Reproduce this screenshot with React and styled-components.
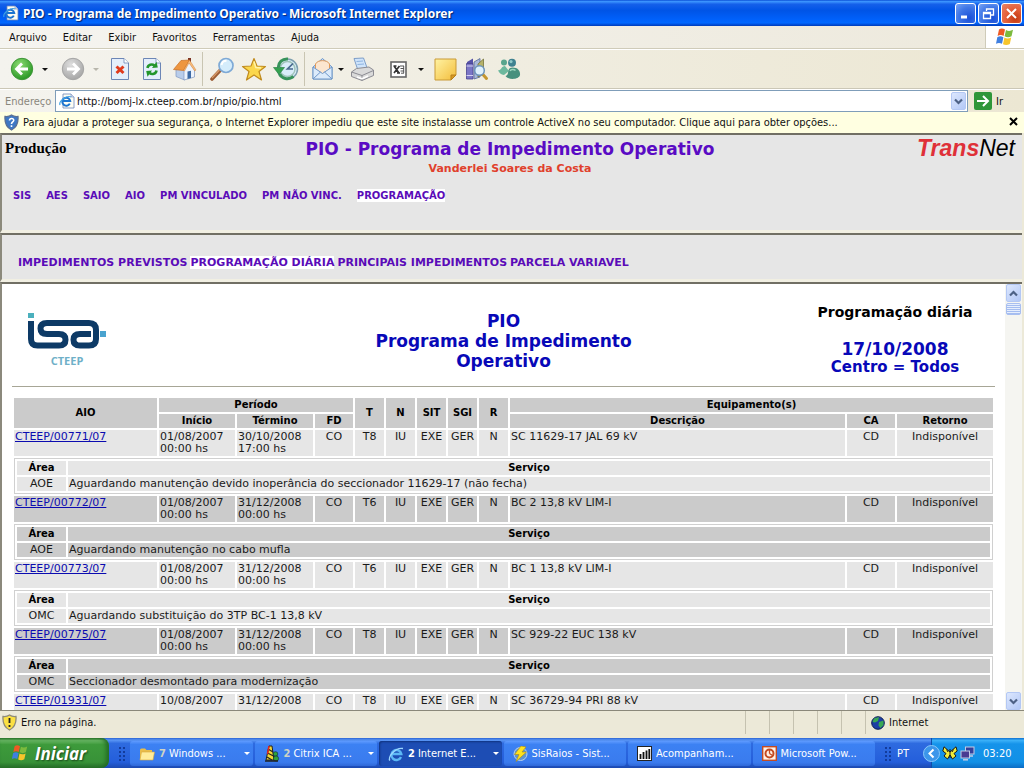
import React from "react";
import styled, { createGlobalStyle, css } from "styled-components";

const ui = `"DejaVu Sans Condensed", "DejaVu Sans", sans-serif`;
const verdana = `"DejaVu Sans", "Liberation Sans", sans-serif`;

const GlobalStyle = createGlobalStyle`
  * { box-sizing: border-box; }
  html, body { margin: 0; height: 100%; }
  #root { height: 100vh; }
  button { font: inherit; color: inherit; background: none; border: 0; padding: 0; }
`;

/* ---------- window ---------- */

const Desktop = styled.div`
  height: 100vh;
  display: flex;
  flex-direction: column;
  overflow: hidden;
  background: #ece9d8;
  font-family: ${ui};
  font-size: 11px;
  color: #111;
`;

const TitleBar = styled.header`
  flex: none;
  height: 26px;
  display: flex;
  align-items: center;
  gap: 4px;
  padding: 0 2px 0 3px;
  background: linear-gradient(#0a4fd6 0%, #3c95ff 6%, #1560ea 16%, #0054e6 40%, #0061fb 75%, #0168ff 88%, #0048d0 96%, #003cb8 100%);
`;

const WindowTitle = styled.h1`
  flex: 1;
  margin: 0;
  font-family: "Noto Sans", sans-serif;
  font-size: 12px;
  font-weight: 700;
  color: #fff;
  text-shadow: 1px 1px 1px #0a246a;
  white-space: nowrap;
`;

const CaptionButton = styled.button`
  width: 21px;
  height: 21px;
  border: 1px solid #fff;
  border-radius: 3px;
  display: grid;
  place-items: center;
  margin-left: -2px;
  background: ${(p) =>
    p.$close
      ? "radial-gradient(circle at 70% 75%, #c33a12, #e5603b 50%, #e98568)"
      : "radial-gradient(circle at 70% 75%, #1a50d8, #3f76e6 55%, #7aa5f5)"};
`;

const MenuBar = styled.nav`
  flex: none;
  height: 23px;
  display: flex;
  align-items: stretch;
  background: linear-gradient(90deg, #f5f4f0, #ede9dc);
  border-bottom: 1px solid #cfcbb9;
`;

const MenuList = styled.div`
  flex: 1;
  display: flex;
  align-items: center;
  gap: 16px;
  padding-left: 9px;
`;

const Throbber = styled.div`
  width: 39px;
  display: grid;
  place-items: center;
  background: #fff;
  border-left: 1px solid #cfcbb9;
`;

const Toolbar = styled.div`
  flex: none;
  height: 40px;
  display: flex;
  align-items: center;
  padding-left: 6px;
  background: linear-gradient(90deg, #f4f3ee, #ece7d3);
  border-top: 1px solid #fff;
  border-bottom: 1px solid #cbc7b6;
`;

const ToolButton = styled.button`
  width: ${(p) => (p.$narrow ? 28 : 32)}px;
  height: 32px;
  display: grid;
  place-items: center;
`;

const DropButton = styled.button`
  width: ${(p) => (p.$narrow ? 10 : 14)}px;
  height: 32px;
  display: grid;
  place-items: center;
  margin-right: ${(p) => p.$after || 0}px;

  &::before {
    content: "";
    border: 3px solid transparent;
    border-top-color: ${(p) => (p.$disabled ? "#b8b6ac" : "#111")};
    border-bottom: 0;
  }
`;

const DropSpacer = styled.span`
  width: 4px;
`;

const ToolSeparator = styled.span`
  width: 1px;
  height: 34px;
  margin: 0 3px 0 2px;
  background: #c9c5b2;
`;

const AddressBar = styled.form`
  flex: none;
  height: 23px;
  display: flex;
  align-items: center;
  padding: 0 21px 0 5px;
  background: linear-gradient(90deg, #f4f3ee, #ece7d3);
  border-top: 1px solid #fff;
`;

const AddressLabel = styled.label`
  color: #8a877d;
  width: 50px;
`;

const AddressField = styled.div`
  flex: 1;
  height: 22px;
  display: flex;
  align-items: center;
  padding: 0 1px 0 3px;
  background: #fff;
  border: 1px solid #7f9db9;
`;

const AddressInput = styled.input`
  flex: 1;
  min-width: 0;
  border: 0;
  outline: 0;
  padding: 0 2px;
  font: inherit;
  color: #111;
  background: transparent;
`;

const ChevronButton = styled.button`
  width: 15px;
  height: 18px;
  display: grid;
  place-items: center;
  border-radius: 2px;
  border: 1px solid #b4c8f4;
  background: linear-gradient(135deg, #dce7fe, #b3c8f6);
`;

const GoButton = styled.button`
  display: flex;
  align-items: center;
  gap: 4px;
  margin-left: 6px;
`;

const InfoBar = styled.div`
  flex: none;
  height: 21px;
  display: flex;
  align-items: center;
  gap: 4px;
  padding: 0 6px 0 4px;
  background: #ffffe1;
`;

const InfoText = styled.button`
  flex: 1;
  text-align: left;
  white-space: nowrap;
`;

/* ---------- page frames ---------- */

const Frames = styled.main`
  flex: 1;
  min-height: 0;
  display: flex;
  flex-direction: column;
  padding-right: 2px;
  font-family: ${verdana};
`;

const frame = css`
  border-top: 2px solid #716f64;
  border-left: 2px solid #8b897c;
`;

const TopFrame = styled.header`
  ${frame}
  flex: none;
  height: 100px;
  padding: 4px 7px 0 3px;
  background: #e6e6e6;
  border-bottom: 3px solid #f1efe2;
`;

const TopRow = styled.div`
  display: grid;
  grid-template-columns: 1fr auto 1fr;
  align-items: start;
  height: 50px;
`;

const Environment = styled.strong`
  font-family: "Liberation Serif", serif;
  font-size: 15px;
  line-height: 18px;
  color: #000;
`;

const AppHeading = styled.div`
  text-align: center;
  font-weight: 700;
  font-size: 17px;
  line-height: 20px;
  color: #5a0bc4;
`;

const UserName = styled.div`
  font-size: 11px;
  color: #e0402c;
`;

const Brand = styled.div`
  justify-self: end;
  font-family: "Liberation Sans", sans-serif;
  font-style: italic;
  font-size: 23px;
  line-height: 18px;
  color: #000;

  b { color: #df3038; }
`;

const LinkRow = styled.nav`
  display: flex;
  align-items: center;
  gap: ${(p) => p.$gap}px;
  font-size: ${(p) => p.$size}px;
  line-height: 13px;
  font-weight: 700;
  padding-left: ${(p) => p.$indent}px;
`;

const NavLink = styled.a`
  color: #5a0bb8;
  text-decoration: none;
  white-space: nowrap;
  background: ${(p) => (p.$active ? "#fff" : "none")};
`;

const SubFrame = styled.div`
  ${frame}
  flex: none;
  height: 49px;
  padding-top: 21px;
  background: #e6e6e6;
  border-bottom: 3px solid #f1efe2;
`;

const MainFrame = styled.section`
  ${frame}
  flex: 1;
  min-height: 0;
  display: flex;
  background: #fff;
`;

const Page = styled.div`
  flex: 1;
  min-width: 0;
  overflow: hidden;
  padding: 0 10px;
`;

const ReportHeader = styled.div`
  display: grid;
  grid-template-columns: 200px 1fr 200px;
  height: 103px;
  margin-bottom: 9px;
  border-bottom: 1px solid #a7a696;
  text-align: center;
  font-weight: 700;
  color: #0808b8;
`;

const LogoCell = styled.div`
  padding: 27px 0 0 14px;
  text-align: left;
`;

const ReportTitle = styled.h2`
  margin: 0;
  padding-top: 27px;
  font-size: 17px;
  line-height: 20px;
`;

const ReportMeta = styled.div`
  padding-top: 19px;
  font-size: 15px;
  line-height: 18px;
`;

const MetaTitle = styled.div`
  margin-bottom: 19px;
  font-size: 14px;
  color: #000;
`;

const MetaDate = styled.div`
  font-size: 17px;
`;

const Scrollbar = styled.div`
  flex: none;
  width: 17px;
  display: flex;
  flex-direction: column;
  gap: 1px;
  align-items: center;
  background: #f5f5f1;
`;

const Thumb = styled.div`
  width: 15px;
  height: 12px;
  border-radius: 2px;
  border: 1px solid #a9bff0;
  background: repeating-linear-gradient(#e6eefd 0 1px, #a5bdf0 1px 2px);
  margin-bottom: auto;
`;

/* ---------- table ---------- */

const Table = styled.table`
  width: 100%;
  table-layout: fixed;
  border-collapse: separate;
  border-spacing: 2px;
  font-size: 11px;
  line-height: 12px;
  color: #1a1a1a;
`;

const HeadCell = styled.th`
  padding: 1px;
  background: ${(p) => p.$tone || "#cbcbcb"};
  font-size: 10px;
  font-weight: 700;
  color: #000;
`;

const MainRow = styled.tr`
  height: 26px;
`;

const Cell = styled.td`
  padding: 1px;
  vertical-align: top;
  text-align: ${(p) => (p.$center ? "center" : "left")};
  background: ${(p) => p.$tone};
  white-space: nowrap;
`;

const NestCell = styled.td`
  padding: 0;
`;

const NestTable = styled(Table)`
  border: 1px solid #d0d0d0;
`;

const AioLink = styled.a`
  color: #0b0bb0;
`;

/* ---------- status + task bar ---------- */

const StatusBar = styled.footer`
  flex: none;
  height: 28px;
  display: flex;
  align-items: stretch;
  padding: 0 2px 4px;
  background: #ece9d8;
  border-top: 1px solid #8a887a;
`;

const StatusText = styled.div`
  flex: 1;
  display: flex;
  align-items: center;
  gap: 4px;
`;

const StatusPane = styled.div`
  width: ${(p) => p.$width}px;
  display: flex;
  align-items: center;
  gap: 4px;
  padding-left: 5px;
  border-left: 1px solid #c5c2b0;
`;

const TaskBar = styled.footer`
  flex: none;
  height: 30px;
  display: flex;
  align-items: stretch;
  color: #fff;
  background: linear-gradient(#2a63d4 0%, #5a96f5 7%, #2e6be0 18%, #245edb 80%, #1c49b0 100%);
`;

const StartButton = styled.button`
  width: 109px;
  display: flex;
  align-items: center;
  gap: 6px;
  padding-left: 11px;
  border-radius: 0 8px 8px 0;
  background: linear-gradient(#2f7a2e 0%, #6ab865 8%, #3d9a3b 22%, #389238 80%, #27702a 100%);
  box-shadow: inset -3px 0 4px #236b25;
  font-family: "Open Sans", "Noto Sans", sans-serif;
  font-size: 17px;
  font-style: italic;
  font-weight: 700;
  color: #fff;
  text-shadow: 1px 1px 2px #174518;
`;

const Grip = styled.span`
  width: 9px;
  margin: 8px 3px 5px 9px;
  background-image: radial-gradient(circle, #123c9c 1px, transparent 1px);
  background-size: 4px 4px;
`;

const Tasks = styled.div`
  flex: 1;
  min-width: 0;
  display: flex;
  gap: 2px;
  padding: 3px 0 2px;
`;

const Task = styled.button`
  flex: 1;
  min-width: 0;
  display: flex;
  align-items: center;
  gap: 4px;
  padding: 0 3px 0 9px;
  border-radius: 3px;
  text-align: left;
  background: ${(p) =>
    p.$active ? "#1d4db4" : "linear-gradient(#5f9bff 0%, #3c81f3 14%, #3a7bee 85%, #2f68d8 100%)"};
  box-shadow: ${(p) => (p.$active ? "inset 1px 1px 2px #10337f" : "none")};
`;

const TaskLabel = styled.span`
  flex: 1;
  overflow: hidden;
  white-space: nowrap;

  b { color: ${(p) => (p.$active ? "#fff" : "#cfd3c4")}; margin-right: 3px; }
`;

const TaskArrow = styled.span`
  border: 3px solid transparent;
  border-top-color: #fff;
  border-bottom: 0;
`;

const Language = styled.button`
  width: 35px;
  text-align: left;
  padding-left: 1px;
`;

const Tray = styled.div`
  width: 93px;
  display: flex;
  align-items: center;
  gap: 2px;
  background: linear-gradient(#0e6fd0 0%, #3ab0f8 8%, #1593ea 20%, #1290e6 80%, #0c6cc4 100%);
  border-left: 1px solid #0f4ea8;
`;

const TrayToggle = styled.button`
  flex: none;
  display: grid;
  margin-left: -9px;
`;

const Clock = styled.time`
  margin-left: 6px;
`;

/* ---------- icons ---------- */

const WindowsFlag = ({ size = 20 }) => (
  <svg width={size} height={size} viewBox="0 0 20 20">
    <path d="M4 2.5C6 1 8 1.300 10 2.500L8.600 9C6.600 7.800 4.600 7.800 2.600 9z" fill="#ee5a24" />
    <path d="M11 3C13 4.200 15.500 4.200 18 2.800L16.500 9.300C14 10.600 11.600 10.400 9.600 9.300z" fill="#7cba3d" />
    <path d="M2.300 10.200C4.300 9 6.400 9 8.400 10.200L7 16.800C5 15.600 3 15.600 1 16.800z" fill="#3f7fe0" />
    <path d="M9.400 10.600C11.400 11.800 13.800 11.800 16.200 10.500L14.800 17C12.500 18.400 10 18.300 8 17.200z" fill="#f7c52b" />
  </svg>
);

const IePage = ({ size = 16 }) => (
  <svg width={size} height={size} viewBox="0 0 16 16">
    <path d="M4 1h8l3 3v11H4z" fill="#fdfdf3" stroke="#6d86b8" strokeWidth=".8" />
    <path d="M12 1v3h3" fill="#d3dcf0" stroke="#6d86b8" strokeWidth=".6" />
    <path d="M10.800 10.600A4 4 0 1 1 11.200 8H4" fill="none" stroke="#1c74d0" strokeWidth="2" />
    <path d="M1 12C-.5 8 8 2 12 4" fill="none" stroke="#3fa0e4" strokeWidth="1.200" />
  </svg>
);

const IeGlyph = () => (
  <svg width="16" height="16" viewBox="0 0 16 16">
    <path d="M13 11A5 5 0 1 1 13.300 8H4" fill="none" stroke="#5cb8f5" strokeWidth="2.400" />
    <path d="M2 14.500C-1 12 7 1 15 2.500" fill="none" stroke="#9bd7ff" strokeWidth="1.300" />
  </svg>
);

const RoundArrow = ({ forward }) => (
  <svg width="24" height="24" viewBox="0 0 24 24">
    <defs>
      <radialGradient id={forward ? "fwd" : "back"} cx=".4" cy=".3" r=".75">
        <stop offset="0" stopColor={forward ? "#dedede" : "#8ddb72"} />
        <stop offset="1" stopColor={forward ? "#a3a3a3" : "#239421"} />
      </radialGradient>
    </defs>
    <circle cx="12" cy="12" r="10.700" fill={`url(#${forward ? "fwd" : "back"})`} stroke={forward ? "#a5a5a5" : "#3f9638"} />
    <g transform={forward ? "rotate(180 12 12)" : undefined}>
      <path d="M18 12H7M12 6.500L6.500 12L12 17.500" fill="none" stroke="#fff" strokeWidth="2.800" />
    </g>
  </svg>
);

const PageBase = () => (
  <>
    <path d="M1.500 1.500H14L18.500 6V22.500H1.500z" fill="#e4eefb" stroke="#6c86b6" />
    <path d="M14 1.500V6H18.500" fill="#fff" stroke="#6c86b6" strokeWidth=".8" />
  </>
);

const StopIcon = () => (
  <svg width="20" height="24" viewBox="0 0 20 24">
    <PageBase />
    <path d="M6.500 9.500L13.500 16M13.500 9.500L6.500 16" stroke="#e03a1c" strokeWidth="3" />
  </svg>
);

const RefreshIcon = () => (
  <svg width="20" height="24" viewBox="0 0 20 24">
    <PageBase />
    <path d="M5.500 11C6 7.500 10 6.500 12.500 8.500" fill="none" stroke="#23952b" strokeWidth="2.600" />
    <path d="M10 11L15.800 10.500L14.500 4.800z" fill="#23952b" />
    <path d="M14.500 13.500C14 17 10 18 7.500 16" fill="none" stroke="#23952b" strokeWidth="2.600" />
    <path d="M10 13.500L4.200 14L5.500 19.700z" fill="#23952b" />
  </svg>
);

const HomeIcon = () => (
  <svg width="25" height="24" viewBox="0 0 25 24">
    <path d="M16 1h3v6l-3-3z" fill="#7c3424" />
    <path d="M4 12v7.500l8.500 3.500V12z" fill="#b9cdea" stroke="#7e97c0" strokeWidth=".7" />
    <path d="M12 23V12l5-7.500L22.500 13v7z" fill="#edf3fc" stroke="#7e97c0" strokeWidth=".7" />
    <path d="M15.500 22v-7.500l3.500-.8v7.300z" fill="#3d6ba6" />
    <path d="M1.500 12.500L9 3.500L17.500 3L11.500 13.500z" fill="#ee9640" stroke="#c96f22" strokeWidth=".7" />
    <path d="M17.500 3L24 13L22.800 14L17 6L12.500 14L11.500 13.500z" fill="#f8bd7c" stroke="#c96f22" strokeWidth=".4" />
  </svg>
);

const SearchIcon = () => (
  <svg width="25" height="24" viewBox="0 0 25 24">
    <path d="M10 13.500L2 22" stroke="#9c5c34" strokeWidth="3.600" strokeLinecap="round" />
    <path d="M9.500 13L2 21" stroke="#d79c6c" strokeWidth="1.200" />
    <circle cx="16" cy="8.500" r="7" fill="#d4ecfb" stroke="#7faad6" strokeWidth="1.700" />
    <path d="M11.500 8a5 5 0 0 1 5-4.300" fill="none" stroke="#fff" strokeWidth="2" />
  </svg>
);

const StarIcon = () => (
  <svg width="26" height="25" viewBox="0 0 26 25">
    <path d="M13 1.500L16 9L24.500 9.500L18 14.500L20.500 23L13 18L5.500 23L8 14.500L1.500 9.500L10 9z" fill="#fbd74c" stroke="#c08b1e" strokeWidth="1.200" strokeLinejoin="round" />
    <path d="M13 4.500L14.800 10.500L20 11" fill="none" stroke="#fff3a8" strokeWidth="1.500" />
  </svg>
);

const HistoryIcon = () => (
  <svg width="26" height="24" viewBox="0 0 26 24">
    <circle cx="14.500" cy="12" r="10" fill="#d9edf9" stroke="#7d9fae" strokeWidth="1.500" />
    <circle cx="14.500" cy="12" r="7.500" fill="none" stroke="#9fc3b9" strokeWidth="1.500" />
    <path d="M20 6.500L14.500 12H20" fill="none" stroke="#48698e" strokeWidth="1.700" />
    <path d="M15 2C9 1.500 5.500 5.500 5.500 10M20.500 19.500C15 23.500 9 21.500 6.500 17" fill="none" stroke="#37935a" strokeWidth="3" />
    <path d="M.5 10.500H11.500L6 17.500z" fill="#34a14f" stroke="#1f7a3a" strokeWidth=".6" />
  </svg>
);

const MailIcon = () => (
  <svg width="23" height="24" viewBox="0 0 23 24">
    <path d="M2 10L11.500 1.500L21 10V22H2z" fill="#c3daf5" stroke="#6f97c8" />
    <path d="M4.500 13V7C6.500 2.500 16.500 2.500 18.500 7V13L11.500 17z" fill="#fce6cf" stroke="#e09a5a" />
    <path d="M2 10L11.500 16.500L21 10V22H2z" fill="#dcebfb" stroke="#6f97c8" />
    <path d="M2 22L9.500 15M21 22L13.500 15" stroke="#6f97c8" fill="none" />
  </svg>
);

const PrintIcon = () => (
  <svg width="25" height="25" viewBox="0 0 25 25">
    <path d="M4 1.500L13.500 1L17.500 12L8 13.500z" fill="#cfe4fb" stroke="#7e9ec8" />
    <path d="M6.500 4.500L13 4M7.500 7.500L14 7" stroke="#8eb3df" />
    <path d="M1.500 15L6.500 11.500L19 10L23.500 13V18.500L12 23.500L1.500 19.500z" fill="#dadada" stroke="#8c8c93" />
    <path d="M1.500 15L12 18.500L23.500 13.500M12 18.500V23.500" fill="none" stroke="#8c8c93" />
    <path d="M7 20L12 21.700L18 19" fill="none" stroke="#fff" strokeWidth="1.500" />
  </svg>
);

const ExcelIcon = () => (
  <svg width="17" height="17" viewBox="0 0 17 17">
    <rect x="1" y="1" width="15" height="15" fill="#fff" stroke="#666" strokeWidth="1.600" />
    <path d="M4 5L9 12M9.500 5L4 12M3.500 5h3M7 12h3" stroke="#333" strokeWidth="1.700" fill="none" />
    <path d="M10 5h4M10.500 7.500h3.500M10.500 10h3.500M11 12.200h3M13.700 5v7" stroke="#555" strokeWidth="1" />
  </svg>
);

const NoteIcon = () => (
  <svg width="23" height="23" viewBox="0 0 23 23">
    <defs>
      <linearGradient id="note" x2="1" y2="1">
        <stop offset="0" stopColor="#fff3a4" />
        <stop offset="1" stopColor="#f3bd3b" />
      </linearGradient>
    </defs>
    <path d="M1 1H22V17L17 22H1z" fill="url(#note)" stroke="#c99a36" />
    <path d="M22 17H17V22z" fill="#d89a24" stroke="#b67f1a" />
  </svg>
);

const ResearchIcon = () => (
  <svg width="24" height="24" viewBox="0 0 24 24">
    <path d="M2 5L8 1.500V19L2 22z" fill="#5551a8" />
    <path d="M1.500 6.500H8V22H1.500z" fill="#7b76c6" stroke="#47438f" strokeWidth=".8" />
    <path d="M9 5L15 1.500V20L9 22z" fill="#a9b9da" stroke="#566796" strokeWidth=".8" />
    <path d="M13 7L18.500 2V17L13 20z" fill="#b7b36a" stroke="#75723b" strokeWidth=".8" />
    <path d="M1.500 9H8M1.500 18.500H8" stroke="#d5d2f2" />
    <path d="M17.500 17L21.500 21.500" stroke="#c4962f" strokeWidth="3" strokeLinecap="round" />
    <circle cx="14.500" cy="13.500" r="4.800" fill="#dff1fd" stroke="#6c93bb" strokeWidth="1.500" />
  </svg>
);

const MessengerIcon = () => (
  <svg width="24" height="22" viewBox="0 0 24 22">
    <circle cx="7" cy="4.500" r="3" fill="#59a58d" />
    <path d="M1 12C4 13.500 4 8 8 8L12 13L7 17C4 16.500 2 15 1 12z" fill="#6cb89d" />
    <circle cx="15" cy="4.800" r="4" fill="#3f8290" />
    <circle cx="14" cy="3.600" r="1.600" fill="#8fc9c8" />
    <path d="M8.500 18C13 17.500 9 9.500 15.500 9.500C21 9.500 23.500 13 23 17C22 21.500 12 22.500 8.500 18z" fill="#47907d" />
    <path d="M13 13c1-2 4-2 5.500-.5" stroke="#9cd6be" strokeWidth="1.500" fill="none" />
  </svg>
);

const Chevron = ({ up }) => (
  <svg width="9" height="7" viewBox="0 0 9 7">
    <path d={up ? "M1 5.500L4.500 2L8 5.500" : "M1 1.500L4.500 5L8 1.500"} fill="none" stroke="#4d6185" strokeWidth="2.200" />
  </svg>
);

const GoIcon = () => (
  <svg width="18" height="18" viewBox="0 0 18 18">
    <rect width="18" height="18" rx="2" fill="#2f9639" />
    <path d="M3 9H14M9 4L14 9L9 14" fill="none" stroke="#fff" strokeWidth="2" />
  </svg>
);

const ShieldIcon = ({ warn }) => (
  <svg width="15" height="17" viewBox="0 0 15 17">
    <path
      d="M7.500 1C9.500 2.500 11.500 2.800 14 2.500C14.500 9 12.500 13.500 7.500 16C2.500 13.500 .5 9 1 2.500C3.500 2.800 5.500 2.500 7.500 1z"
      fill={warn ? "#fbe042" : "#3f78c4"}
      stroke={warn ? "#8d8a79" : "#5b6f92"}
      strokeWidth="1.300"
    />
    {warn ? (
      <path d="M7.500 4v5M7.500 11v2" stroke="#222" strokeWidth="1.800" />
    ) : (
      <path d="M5.500 6.500C5.500 3.500 10 4 9.700 6.500C9.500 8 7.500 8 7.500 10M7.500 11.300v1.700" fill="none" stroke="#fff" strokeWidth="1.600" />
    )}
  </svg>
);

const IsaLogo = () => (
  <svg width="82" height="62" viewBox="0 0 82 62">
    <rect x="2" y="2" width="6" height="5" fill="#4bb0bd" />
    <rect x="74" y="20" width="6" height="6" fill="#4aa3cf" />
    <path
      d="M5 10V28Q5 34.500 11.500 34.500H33Q39.500 34.500 39.500 28.700Q39.500 23 33 23H21Q14.500 23 14.500 17.500Q14.500 12 21 12H63Q70 12 70 19V28Q70 34.500 63 34.500H54Q47.500 34.500 47.500 28.700Q47.500 23 54 23H65"
      fill="none"
      stroke="#0d3a66"
      strokeWidth="6"
    />
    <text x="41" y="54" textAnchor="middle" fontFamily="Open Sans, sans-serif" fontSize="11" fill="#6fb0c8">CTEEP</text>
  </svg>
);

const FolderIcon = () => (
  <svg width="16" height="14" viewBox="0 0 16 14">
    <path d="M1 3Q1 1.500 2.500 1.500H6L7.500 3H13V12.500H1z" fill="#e9bd4a" />
    <path d="M2.500 5H15.500L14 13H1z" fill="#ffec9a" stroke="#d9a93b" strokeWidth=".6" />
  </svg>
);

const CitrixIcon = () => (
  <svg width="16" height="17" viewBox="0 0 16 17">
    <path d="M5 1H8L10 15H2z" fill="#f3d834" stroke="#222" />
    <path d="M4 4L9 7M3.500 8L9.500 11M3 12L8 15" stroke="#222" strokeWidth="1.300" />
    <path d="M5 1L3.500 9" stroke="#d22" strokeWidth="1.500" />
    <circle cx="11.500" cy="9" r="2.300" fill="#2da33a" stroke="#123" strokeWidth=".6" />
    <circle cx="12" cy="13.500" r="2.600" fill="#2da33a" stroke="#123" strokeWidth=".6" />
    <path d="M1 16H14" stroke="#222" strokeWidth="1.500" />
  </svg>
);

const BoltIcon = () => (
  <svg width="15" height="16" viewBox="0 0 15 16">
    <circle cx="7.500" cy="8" r="6.500" fill="#5f94cf" stroke="#bcd2ea" />
    <path d="M8 0L1.500 8.500H6L3 15.500L13.500 6H9L13 1z" fill="#ffe21f" stroke="#b08b0d" strokeWidth=".6" />
  </svg>
);

const ChartIcon = () => (
  <svg width="15" height="15" viewBox="0 0 15 15">
    <rect x=".5" y=".5" width="14" height="14" fill="#fff" stroke="#222" />
    <path d="M3.500 13V8M6.500 13V6M9.500 13V4.500M12.300 13V3" stroke="#111" strokeWidth="1.800" />
  </svg>
);

const PowerPointIcon = () => (
  <svg width="15" height="15" viewBox="0 0 15 15">
    <rect x=".7" y=".7" width="13.600" height="13.600" fill="#fff3e8" stroke="#c44b22" strokeWidth="1.400" />
    <circle cx="7.500" cy="7.500" r="4" fill="none" stroke="#c44b22" strokeWidth="2" />
    <path d="M7.500 7.500V3.500M7.500 7.500L10.500 9.500" stroke="#c44b22" strokeWidth="1.300" />
  </svg>
);

const GlobeIcon = () => (
  <svg width="14" height="14" viewBox="0 0 14 14">
    <circle cx="7" cy="7" r="6.300" fill="#1c3fa5" stroke="#0c1d52" />
    <path d="M3 2.500L8 1L7 5L4 6.500L1.500 6zM8 6L12.500 4.500V9L9.500 12L7.500 9.500z" fill="#38a854" />
  </svg>
);

const ButterflyIcon = () => (
  <svg width="16" height="14" viewBox="0 0 16 14">
    <path d="M8 6L2 .8L.8 5L4 7.500L2 10L5.500 13L8 9L10.500 13L14 10L12 7.500L15.200 5L14 .8z" fill="#f2ec3a" stroke="#1a1a1a" strokeWidth="1" />
    <path d="M8 3v9M4.500 3.500L6 6M11.500 3.500L10 6" stroke="#1a1a1a" strokeWidth="1" />
  </svg>
);

const NetworkIcon = () => (
  <svg width="15" height="15" viewBox="0 0 15 15">
    <rect x="5.500" y="1" width="8.500" height="7" fill="#34409a" stroke="#c3cbe4" />
    <path d="M8 10H13" stroke="#c3cbe4" strokeWidth="1.500" />
    <rect x="1" y="5" width="8.500" height="7" fill="#4a3b92" stroke="#c3cbe4" />
    <path d="M3 13.800H8" stroke="#c3cbe4" strokeWidth="1.500" />
  </svg>
);

/* ---------- data ---------- */

const menus = ["Arquivo", "Editar", "Exibir", "Favoritos", "Ferramentas", "Ajuda"];
const areas = ["SIS", "AES", "SAIO", "AIO", "PM VINCULADO", "PM NÃO VINC.", "PROGRAMAÇÃO"];
const reports = ["IMPEDIMENTOS PREVISTOS", "PROGRAMAÇÃO DIÁRIA", "PRINCIPAIS IMPEDIMENTOS", "PARCELA VARIAVEL"];

const rows = [
  { aio: "CTEEP/00771/07", start: ["01/08/2007", "00:00 hs"], end: ["30/10/2008", "17:00 hs"], t: "T8", desc: "SC 11629-17 JAL 69 kV", area: "AOE", service: "Aguardando manutenção devido inoperância do seccionador 11629-17 (não fecha)" },
  { aio: "CTEEP/00772/07", start: ["01/08/2007", "00:00 hs"], end: ["31/12/2008", "00:00 hs"], t: "T6", desc: "BC 2 13,8 kV LIM-I", area: "AOE", service: "Aguardando manutenção no cabo mufla" },
  { aio: "CTEEP/00773/07", start: ["01/08/2007", "00:00 hs"], end: ["31/12/2008", "00:00 hs"], t: "T6", desc: "BC 1 13,8 kV LIM-I", area: "OMC", service: "Aguardando substituição do 3TP BC-1 13,8 kV" },
  { aio: "CTEEP/00775/07", start: ["01/08/2007", "00:00 hs"], end: ["31/12/2008", "00:00 hs"], t: "T8", desc: "SC 929-22 EUC 138 kV", area: "OMC", service: "Seccionador desmontado para modernização" },
  { aio: "CTEEP/01931/07", start: ["10/08/2007"], end: ["31/12/2008"], t: "T8", desc: "SC 36729-94 PRI 88 kV" },
];

const columns = [143, 76, 76, 38, 29, 29, 29, 29, 29, null, 48, 96];

const tasks = [
  { icon: <FolderIcon />, count: 7, label: "Windows ...", arrow: true },
  { icon: <CitrixIcon />, count: 2, label: "Citrix ICA ...", arrow: true },
  { icon: <IeGlyph />, count: 2, label: "Internet E...", arrow: true, active: true },
  { icon: <BoltIcon />, label: "SisRaios - Sist..." },
  { icon: <ChartIcon />, label: "Acompanham..." },
  { icon: <PowerPointIcon />, label: "Microsoft Pow..." },
];

function ReportRow({ row, tone }) {
  return (
    <>
      <MainRow>
        <Cell $tone={tone}><AioLink href="#aio">{row.aio}</AioLink></Cell>
        <Cell $tone={tone}>{row.start[0]}<br />{row.start[1]}</Cell>
        <Cell $tone={tone}>{row.end[0]}<br />{row.end[1]}</Cell>
        {["CO", row.t, "IU", "EXE", "GER", "N"].map((v) => (
          <Cell key={v} $tone={tone} $center>{v}</Cell>
        ))}
        <Cell $tone={tone}>{row.desc}</Cell>
        <Cell $tone={tone} $center>CD</Cell>
        <Cell $tone={tone} $center>Indisponível</Cell>
      </MainRow>
      {row.service && (
        <tr>
          <NestCell colSpan={12}>
            <NestTable>
              <colgroup>
                <col style={{ width: 49 }} />
                <col />
              </colgroup>
              <tbody>
                <tr>
                  <HeadCell $tone={tone}>Área</HeadCell>
                  <HeadCell $tone={tone}>Serviço</HeadCell>
                </tr>
                <tr>
                  <Cell $tone={tone} $center>{row.area}</Cell>
                  <Cell $tone={tone}>{row.service}</Cell>
                </tr>
              </tbody>
            </NestTable>
          </NestCell>
        </tr>
      )}
    </>
  );
}

function ReportTable() {
  return (
    <Table>
      <colgroup>
        {columns.map((w, i) => (
          <col key={i} style={w ? { width: w } : undefined} />
        ))}
      </colgroup>
      <thead>
        <tr>
          <HeadCell rowSpan={2}>AIO</HeadCell>
          <HeadCell colSpan={3}>Período</HeadCell>
          {["T", "N", "SIT", "SGI", "R"].map((h) => (
            <HeadCell key={h} rowSpan={2}>{h}</HeadCell>
          ))}
          <HeadCell colSpan={3}>Equipamento(s)</HeadCell>
        </tr>
        <tr>
          {["Início", "Término", "FD", "Descrição", "CA", "Retorno"].map((h) => (
            <HeadCell key={h}>{h}</HeadCell>
          ))}
        </tr>
      </thead>
      <tbody>
        {rows.map((row, i) => (
          <ReportRow key={row.aio} row={row} tone={i % 2 ? "#cbcbcb" : "#e6e6e6"} />
        ))}
      </tbody>
    </Table>
  );
}

function BrowserChrome() {
  return (
    <>
      <TitleBar>
        <IePage />
        <WindowTitle>PIO - Programa de Impedimento Operativo - Microsoft Internet Explorer</WindowTitle>
        <CaptionButton aria-label="Minimizar">
          <svg width="13" height="13" viewBox="0 0 13 13"><path d="M2 10h6" stroke="#fff" strokeWidth="3" /></svg>
        </CaptionButton>
        <CaptionButton aria-label="Restaurar">
          <svg width="13" height="13" viewBox="0 0 13 13" fill="none" stroke="#fff" strokeWidth="1.300">
            <path d="M4.500 4V2H11.500V8H9" /><path d="M1.500 5.500H8.500V11.500H1.500zM1.500 6.500h7" />
          </svg>
        </CaptionButton>
        <CaptionButton $close aria-label="Fechar">
          <svg width="13" height="13" viewBox="0 0 13 13"><path d="M2 2L11 11M11 2L2 11" stroke="#fff" strokeWidth="2" /></svg>
        </CaptionButton>
      </TitleBar>
      <MenuBar>
        <MenuList>
          {menus.map((m) => <button key={m}>{m}</button>)}
        </MenuList>
        <Throbber><WindowsFlag /></Throbber>
      </MenuBar>
      <Toolbar>
        <ToolButton aria-label="Voltar"><RoundArrow /></ToolButton>
        <DropButton $after={5} aria-label="Histórico de voltar" />
        <ToolButton aria-label="Avançar"><RoundArrow forward /></ToolButton>
        <DropButton $disabled $after={1} aria-label="Histórico de avançar" />
        <ToolButton aria-label="Parar"><StopIcon /></ToolButton>
        <ToolButton aria-label="Atualizar"><RefreshIcon /></ToolButton>
        <ToolButton aria-label="Página inicial"><HomeIcon /></ToolButton>
        <ToolSeparator />
        <ToolButton aria-label="Pesquisar"><SearchIcon /></ToolButton>
        <ToolButton aria-label="Favoritos"><StarIcon /></ToolButton>
        <ToolButton aria-label="Histórico"><HistoryIcon /></ToolButton>
        <ToolSeparator />
        <ToolButton $narrow aria-label="Correio"><MailIcon /></ToolButton>
        <DropButton $narrow aria-label="Opções de correio" />
        <ToolButton aria-label="Imprimir"><PrintIcon /></ToolButton>
        <DropSpacer />
        <ToolButton aria-label="Editar"><ExcelIcon /></ToolButton>
        <DropButton $after={1} aria-label="Opções de edição" />
        <ToolButton aria-label="Discutir"><NoteIcon /></ToolButton>
        <ToolButton aria-label="Pesquisa"><ResearchIcon /></ToolButton>
        <ToolButton aria-label="Messenger"><MessengerIcon /></ToolButton>
      </Toolbar>
      <AddressBar onSubmit={(e) => e.preventDefault()}>
        <AddressLabel htmlFor="address">Endereço</AddressLabel>
        <AddressField>
          <IePage />
          <AddressInput id="address" defaultValue="http://bomj-lx.cteep.com.br/npio/pio.html" />
          <ChevronButton type="button" aria-label="Endereços digitados"><Chevron /></ChevronButton>
        </AddressField>
        <GoButton type="submit"><GoIcon />Ir</GoButton>
      </AddressBar>
      <InfoBar>
        <ShieldIcon />
        <InfoText>
          Para ajudar a proteger sua segurança, o Internet Explorer impediu que este site instalasse um controle ActiveX no seu computador. Clique aqui para obter opções...
        </InfoText>
        <button aria-label="Fechar aviso">
          <svg width="9" height="9" viewBox="0 0 9 9"><path d="M1 1L8 8M8 1L1 8" stroke="#000" strokeWidth="2" /></svg>
        </button>
      </InfoBar>
    </>
  );
}

function App() {
  return (
    <Desktop>
      <GlobalStyle />
      <BrowserChrome />
      <Frames>
        <TopFrame>
          <TopRow>
            <Environment>Produção</Environment>
            <AppHeading>
              PIO - Programa de Impedimento Operativo
              <UserName>Vanderlei Soares da Costa</UserName>
            </AppHeading>
            <Brand><b>Trans</b>Net</Brand>
          </TopRow>
          <LinkRow $gap={15} $indent={8} $size={10}>
            {areas.map((a) => (
              <NavLink key={a} href="#area" $active={a === "PROGRAMAÇÃO"}>{a}</NavLink>
            ))}
          </LinkRow>
        </TopFrame>
        <SubFrame>
          <LinkRow $gap={3} $indent={16} $size={11}>
            {reports.map((r) => (
              <NavLink key={r} href="#report" $active={r === "PROGRAMAÇÃO DIÁRIA"}>{r}</NavLink>
            ))}
          </LinkRow>
        </SubFrame>
        <MainFrame>
          <Page>
            <ReportHeader>
              <LogoCell><IsaLogo /></LogoCell>
              <ReportTitle>PIO<br />Programa de Impedimento<br />Operativo</ReportTitle>
              <ReportMeta>
                <MetaTitle>Programação diária</MetaTitle>
                <MetaDate>17/10/2008</MetaDate>
                Centro = Todos
              </ReportMeta>
            </ReportHeader>
            <ReportTable />
          </Page>
          <Scrollbar>
            <ChevronButton aria-label="Rolar para cima"><Chevron up /></ChevronButton>
            <Thumb />
            <ChevronButton aria-label="Rolar para baixo"><Chevron /></ChevronButton>
          </Scrollbar>
        </MainFrame>
      </Frames>
      <StatusBar>
        <StatusText><ShieldIcon warn />Erro na página.</StatusText>
        {[1, 2, 3, 4, 5].map((n) => <StatusPane key={n} $width={24} />)}
        <StatusPane $width={157}><GlobeIcon />Internet</StatusPane>
      </StatusBar>
      <TaskBar>
        <StartButton><WindowsFlag size={18} />Iniciar</StartButton>
        <Grip />
        <Tasks>
          {tasks.map((t) => (
            <Task key={t.label} $active={t.active}>
              {t.icon}
              <TaskLabel $active={t.active}>{t.count && <b>{t.count}</b>}{t.label}</TaskLabel>
              {t.arrow && <TaskArrow />}
            </Task>
          ))}
        </Tasks>
        <Grip />
        <Language>PT</Language>
        <Tray>
          <TrayToggle aria-label="Mostrar ícones ocultos">
            <svg width="17" height="17" viewBox="0 0 17 17">
              <circle cx="8.500" cy="8.500" r="8" fill="#3c96ea" stroke="#8cc8f8" />
              <path d="M10.500 4.500L6.500 8.500L10.500 12.500" fill="none" stroke="#fff" strokeWidth="2" />
            </svg>
          </TrayToggle>
          <ButterflyIcon />
          <NetworkIcon />
          <Clock>03:20</Clock>
        </Tray>
      </TaskBar>
    </Desktop>
  );
}

export default App;
